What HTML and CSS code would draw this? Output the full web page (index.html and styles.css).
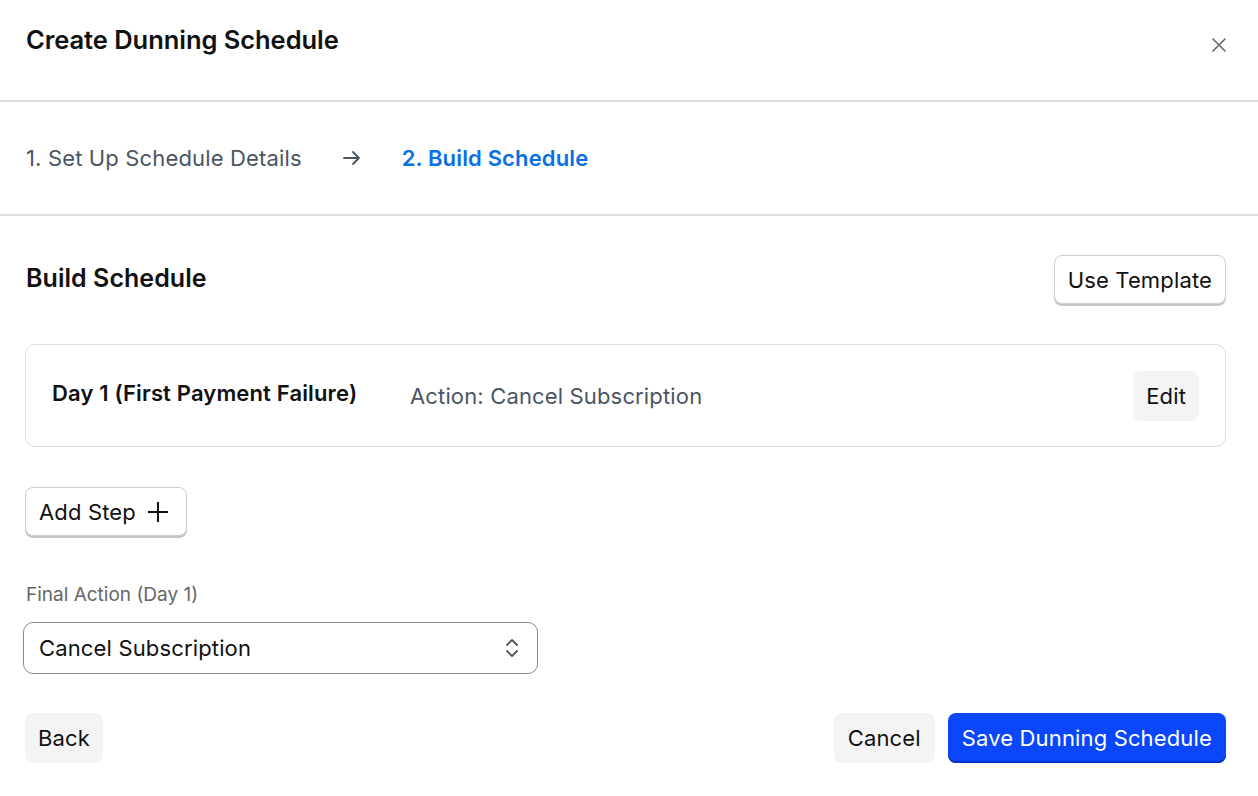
FILE: index.html
```html
<!DOCTYPE html>
<html lang="en">
<head>
<meta charset="utf-8">
<title>Create Dunning Schedule</title>
<link rel="stylesheet" href="styles.css">
</head>
<body>
<div class="modal">
  <header class="modal-header">
    <h1 class="modal-title">Create Dunning Schedule</h1>
    <button class="close-btn" aria-label="Close">
      <svg width="16" height="16" viewBox="0 0 16 16"><path d="M2 2L14 14M14 2L2 14" stroke="#666" stroke-width="1.6" stroke-linecap="round" fill="none"/></svg>
    </button>
  </header>

  <nav class="steps">
    <span class="step">1. Set Up Schedule Details</span>
    <svg class="step-arrow" width="18" height="16" viewBox="0 0 18 16"><path d="M1 8H16M10 2L16 8L10 14" stroke="#4b5563" stroke-width="1.8" fill="none" stroke-linecap="round" stroke-linejoin="round"/></svg>
    <span class="step step-active">2. Build Schedule</span>
  </nav>

  <main class="content">
    <div class="section-head">
      <h2 class="section-title">Build Schedule</h2>
      <button class="btn btn-outline">Use Template</button>
    </div>

    <div class="step-card">
      <span class="step-day">Day 1 (First Payment Failure)</span>
      <span class="step-action">Action: Cancel Subscription</span>
      <button class="btn btn-soft">Edit</button>
    </div>

    <div class="add-row">
      <button class="btn btn-outline btn-add">Add Step
        <svg width="24" height="24" viewBox="0 0 24 24"><path d="M12 2V22M2 12H22" stroke="#111" stroke-width="2" fill="none"/></svg>
      </button>
    </div>

    <div class="field">
      <label class="field-label">Final Action (Day 1)</label>
      <div class="select">
        <span>Cancel Subscription</span>
        <svg width="16" height="22" viewBox="0 0 16 22"><path d="M3 8L8 3L13 8M3 14L8 19L13 14" stroke="#555" stroke-width="1.8" fill="none" stroke-linecap="round" stroke-linejoin="round"/></svg>
      </div>
    </div>

    <footer class="footer">
      <button class="btn btn-soft">Back</button>
      <div class="footer-right">
        <button class="btn btn-soft">Cancel</button>
        <button class="btn btn-primary">Save Dunning Schedule</button>
      </div>
    </footer>
  </main>
</div>
</body>
</html>
```

FILE: styles.css
```css
* { box-sizing: border-box; }
html, body { margin: 0; padding: 0; background: #fff; }
body {
  font-family: Inter, "Noto Sans", sans-serif;
  color: #111;
  width: 1258px;
  height: 796px;
  overflow: hidden;
  letter-spacing: 0.15px;
}
button { font-family: inherit; letter-spacing: inherit; }

.modal-header {
  height: 102px;
  border-bottom: 2px solid #dcdcdc;
  display: flex;
  justify-content: space-between;
  align-items: flex-start;
  padding: 24px 30px 0 26px;
}
.modal-title {
  margin: 0;
  font-size: 25.5px;
  line-height: 32px;
  font-weight: 600;
  letter-spacing: -0.05px;
}
.close-btn {
  background: none;
  border: 0;
  padding: 0;
  margin-top: 12px;
  width: 18px;
  height: 18px;
  display: flex;
  align-items: center;
  justify-content: center;
  cursor: pointer;
}

.steps {
  height: 114px;
  border-bottom: 2px solid #dcdcdc;
  display: flex;
  align-items: center;
  padding: 0 26px;
}
.step {
  font-size: 22px;
  color: #4b5563;
}
.step-arrow { margin: 0 41px; }
.step-active {
  color: #0b6fe4;
  font-weight: 600;
}

.content {
  padding: 38px 32px 0 25px;
}
.section-head {
  display: flex;
  justify-content: space-between;
  align-items: center;
  height: 51px;
}
.section-title {
  margin: -4px 0 0 1px;
  font-size: 25px;
  font-weight: 600;
  letter-spacing: 0.05px;
}

.btn {
  height: 50px;
  padding: 0 13px;
  font-size: 22px;
  border-radius: 8px;
  border: 0;
  color: #111;
  cursor: pointer;
  display: inline-flex;
  align-items: center;
}
.btn-outline {
  background: #fff;
  border: 1px solid #cfcfcf;
  box-shadow: 0 2px 0 #c6c6c6;
  height: 49px;
}
.btn-soft {
  background: #f4f4f4;
}
.btn-primary {
  background: #0a47fb;
  color: #fff;
  box-shadow: inset 0 -2px 0 #0634c4;
  padding: 0 14px;
}

.step-card {
  margin-top: 39px;
  height: 103px;
  border: 1px solid #dcdcdc;
  border-radius: 10px;
  display: flex;
  align-items: center;
  padding: 0 26px;
}
.step-day {
  width: 358px;
  font-size: 22px;
  font-weight: 600;
  letter-spacing: 0.15px;
  margin-top: -6px;
}
.step-action {
  flex: 1;
  font-size: 22px;
  color: #4b5563;
}

.add-row { margin-top: 40px; }
.btn-add {
  gap: 10px;
  padding: 0 13px;
  width: 162px;
}

.field { margin-top: 47px; }
.field-label {
  display: block;
  font-size: 19px;
  color: #666;
  line-height: 24px;
  margin-left: 1px;
  letter-spacing: 0;
}
.select {
  margin-top: 15px;
  margin-left: -2px;
  width: 515px;
  height: 52px;
  border: 1px solid #8a8a8a;
  border-radius: 10px;
  display: flex;
  align-items: center;
  justify-content: space-between;
  padding: 0 17px 0 15px;
  font-size: 22px;
}

.footer {
  margin-top: 39px;
  display: flex;
  justify-content: space-between;
  align-items: center;
}
.footer-right {
  display: flex;
  gap: 13px;
}
.footer-right .btn-soft { padding: 0 14px; }
```
